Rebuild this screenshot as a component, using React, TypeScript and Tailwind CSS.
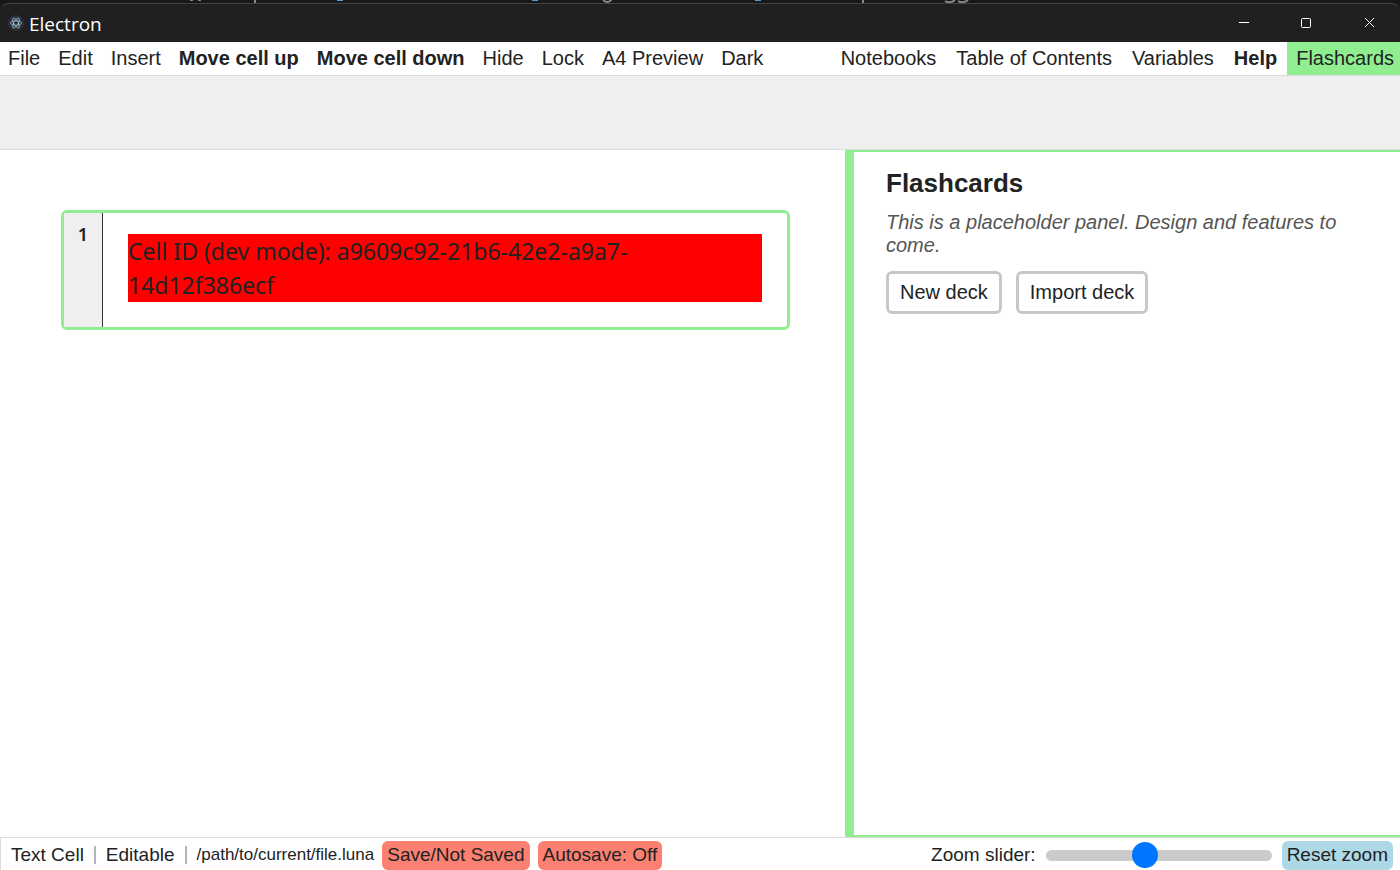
import React, { useState } from "react";

const leftMenu = [
  { label: "File" },
  { label: "Edit" },
  { label: "Insert" },
  { label: "Move cell up", bold: true },
  { label: "Move cell down", bold: true },
  { label: "Hide" },
  { label: "Lock" },
  { label: "A4 Preview" },
  { label: "Dark" },
];

const rightMenu = [
  { label: "Notebooks" },
  { label: "Table of Contents" },
  { label: "Variables" },
  { label: "Help", bold: true },
];

// Sliver of the window that lies behind this one
function WindowBehind() {
  return (
    <svg width="1400" height="3" viewBox="0 0 1400 3" fill="none" className="block h-[3px] max-w-full shrink-0 overflow-hidden" preserveAspectRatio="xMinYMin slice" aria-hidden="true">
      <g stroke="#858585" strokeWidth="2">
        <path d="M190 0h3M198 0h3M255 0v3M863 0v3" />
        <path d="M603 0q5 4.500 9-1M945 1q5 3 10-1M958 1q5 3 10-1" />
      </g>
      <path d="M337 0h6M532 0h6M755 0h6" stroke="#569cd6" strokeWidth="2" />
    </svg>
  );
}

function ElectronIcon() {
  return (
    <svg viewBox="0 0 32 32" className="size-4" aria-hidden="true">
      <circle cx="16" cy="16" r="16" fill="#2b2e3a" />
      <g fill="none" stroke="#a8d8e0" strokeOpacity="0.85" strokeWidth="1.6">
        <ellipse cx="16" cy="16" rx="11" ry="4.500" />
        <ellipse cx="16" cy="16" rx="11" ry="4.500" transform="rotate(60 16 16)" />
        <ellipse cx="16" cy="16" rx="11" ry="4.500" transform="rotate(120 16 16)" />
      </g>
    </svg>
  );
}

function TitleBar() {
  return (
    <header className="flex h-[39px] shrink-0 items-center rounded-t-lg border-t border-[#434343] bg-[#202020] text-white">
      <div className="flex flex-1 items-center gap-[5px] pl-2">
        <ElectronIcon />
        <h1 className="pt-[2px] font-['Open_Sans','Noto_Sans',sans-serif] text-[19px] leading-6">Electron</h1>
      </div>
      <button type="button" aria-label="Minimize" className="flex h-full w-[62px] items-center justify-center pb-[2px]">
        <svg viewBox="0 0 11 11" className="size-[11px]" stroke="currentColor" shapeRendering="crispEdges">
          <path d="M0 5.5h10" />
        </svg>
      </button>
      <button type="button" aria-label="Maximize" className="flex h-full w-[63px] items-center justify-center pb-[2px]">
        <svg viewBox="0 0 11 11" className="size-[11px]" fill="none" stroke="currentColor">
          <rect x="0.5" y="1.5" width="9" height="9" rx="1" />
        </svg>
      </button>
      <button type="button" aria-label="Close" className="flex h-full w-[62px] items-center justify-center pb-[2px]">
        <svg viewBox="0 0 11 11" className="size-[11px]" stroke="currentColor">
          <path d="M1 1l9 9M10 1l-9 9" />
        </svg>
      </button>
    </header>
  );
}

function MenuBar() {
  return (
    <nav className="flex h-[34px] shrink-0 items-stretch justify-between border-b border-[#dcdcdc] bg-white text-xl leading-6 whitespace-nowrap">
      <div className="flex gap-[2px]">
        {leftMenu.map((item) => (
          <button key={item.label} type="button" className={item.bold ? "px-2 pb-[2px] font-bold" : "px-2 pb-[2px]"}>
            {item.label}
          </button>
        ))}
      </div>
      <div className="flex">
        {rightMenu.map((item) => (
          <button key={item.label} type="button" className={item.bold ? "px-[10px] pb-[2px] font-bold" : "px-[10px] pb-[2px]"}>
            {item.label}
          </button>
        ))}
        <button type="button" className="bg-[#90ee90] pr-[6px] pb-[2px] pl-[9px]">Flashcards</button>
      </div>
    </nav>
  );
}

function Cell() {
  return (
    <article className="flex rounded-md border-3 border-[#90ee90]">
      <div className="w-[39px] shrink-0 border-r border-[#333] bg-[#efefef] pt-[7px] text-center font-['Noto_Sans',sans-serif] text-lg leading-7 font-semibold">
        1
      </div>
      <div className="flex-1 px-[25px] pt-[21px] pb-[25px]">
        <p className="bg-[#ff0000] font-['Noto_Sans',sans-serif] text-[23px] leading-[34px]">
          Cell ID (dev mode): a9609c92-21b6-42e2-a9a7-14d12f386ecf
        </p>
      </div>
    </article>
  );
}

function FlashcardsPanel() {
  return (
    <aside className="border-y-2 border-l-9 border-[#90ee90] px-8 pt-4">
      <h2 className="text-[26px] leading-[30px] font-bold">Flashcards</h2>
      <p className="mt-[13px] text-xl leading-[23px] text-[#555] italic">
        This is a placeholder panel. Design and features to come.
      </p>
      <div className="mt-[14px] flex gap-[14px] text-xl">
        <button type="button" className="h-[43px] rounded-md border-3 border-[#c8c8c8] px-[11px] pb-[2px]">New deck</button>
        <button type="button" className="h-[43px] rounded-md border-3 border-[#c8c8c8] px-[11px] pb-[2px]">Import deck</button>
      </div>
    </aside>
  );
}

function StatusBar() {
  const [zoom, setZoom] = useState(43);
  return (
    <footer className="flex h-[33px] shrink-0 items-center justify-between border-t border-l border-[#dcdcdc] bg-white pt-[2px] pr-[7px] pl-[10px] text-[19px] leading-6 whitespace-nowrap">
      <div className="flex items-center gap-[10px]">
        <span>Text Cell</span>
        <span className="h-[18px] w-[2px] bg-[#b4b4b4]" />
        <span>Editable</span>
        <span className="h-[18px] w-[2px] bg-[#b4b4b4]" />
        <div className="flex items-center gap-2">
          <span className="text-[17px]">/path/to/current/file.luna</span>
          <button type="button" className="h-[29px] rounded-md bg-[#fa8072] px-[5px]">Save/Not Saved</button>
          <button type="button" className="h-[29px] rounded-md bg-[#fa8072] px-[5px]">Autosave: Off</button>
        </div>
      </div>
      <div className="flex items-center gap-[10px]">
        <label htmlFor="zoom">Zoom slider:</label>
        <input
          id="zoom"
          type="range"
          min={0}
          max={100}
          value={zoom}
          onChange={(e) => setZoom(Number(e.target.value))}
          className="h-[11px] w-[226px] appearance-none rounded-full bg-[#cbcbcb] [&::-webkit-slider-thumb]:size-[26px] [&::-webkit-slider-thumb]:appearance-none [&::-webkit-slider-thumb]:rounded-full [&::-webkit-slider-thumb]:bg-[#0075ff]"
        />
        <button type="button" onClick={() => setZoom(43)} className="h-[29px] rounded-md bg-[#add8e6] px-[5px]">
          Reset zoom
        </button>
      </div>
    </footer>
  );
}

export default function App() {
  return (
    <div className="flex min-h-screen flex-col bg-[#181818] font-['Liberation_Sans',Arial,sans-serif] text-[#222]">
      <WindowBehind />
      <TitleBar />
      <MenuBar />
      <div className="h-[74px] shrink-0 border-b border-[#dcdcdc] bg-[#efefef]" />
      <div className="grid flex-1 grid-cols-[845fr_555fr] bg-white">
        <main className="pt-[60px] pr-[55px] pl-[61px]">
          <Cell />
        </main>
        <FlashcardsPanel />
      </div>
      <StatusBar />
    </div>
  );
}
